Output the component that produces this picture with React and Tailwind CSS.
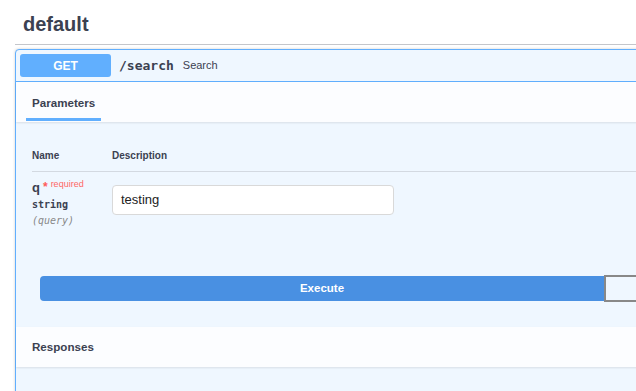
export default function App() {
  return (
    <div className="w-[636px] h-[391px] overflow-hidden bg-white text-[#3b4151] font-['Liberation_Sans',Arial,sans-serif]">
      {/* Tag heading */}
      <div className="ml-[15px] w-[700px] border-b border-[#c4c6cb] pl-[8px] pt-[12px] pb-[8px]">
        <h3 className="text-[20px] leading-[24px] font-bold">default</h3>
      </div>

      {/* Operation block */}
      <div className="ml-[15px] mt-[4px] w-[1240px] rounded-[4px] border border-[#61affe] bg-[#eff7ff] shadow-[0_0_3px_rgba(0,0,0,0.19)]">
        {/* Summary */}
        <div className="flex items-center border-b border-[#61affe] px-[4px] py-[4px]">
          <span className="flex h-[23px] w-[91px] items-center justify-center rounded-[3px] bg-[#61affe] text-[12px] font-bold text-white">
            GET
          </span>
          <span className="ml-[8px] font-['DejaVu_Sans_Mono',monospace] text-[13px] font-bold">/search</span>
          <span className="ml-[9px] text-[11px]">Search</span>
        </div>

        {/* Parameters header */}
        <div className="flex h-[40px] items-end bg-[#fcfdff] pl-[10px] pb-[1px] shadow-[0_1px_2px_rgba(0,0,0,0.1)]">
          <div className="border-b-[3px] border-[#61affe] px-[6px] pb-[7px]">
            <h4 className="text-[11.6px] leading-[16px] font-bold">Parameters</h4>
          </div>
        </div>

        {/* Parameters table */}
        <div className="px-[16px] pt-[27px]">
          <div className="flex border-b border-[#d3d9e1] pb-[8px] text-[10px] leading-[14px] font-bold">
            <div className="w-[80px]">Name</div>
            <div>Description</div>
          </div>
          <div className="flex pt-[7px]">
            <div className="w-[80px]">
              <div className="flex items-start leading-[18px]">
                <span className="text-[13px] font-bold">q</span>
                <span className="ml-[3px] text-[12px] font-bold leading-[16px] text-[#ff5c5c]">*</span>
                <span className="ml-[3px] mt-[-1px] text-[9px] leading-[12px] text-[#ff6666]">required</span>
              </div>
              <div className="font-['DejaVu_Sans_Mono',monospace] text-[10px] leading-[16px] font-bold">string</div>
              <div className="font-['DejaVu_Sans_Mono',monospace] text-[10px] leading-[16px] italic text-[#888]">(query)</div>
            </div>
            <div className="pt-[6px]">
              <div className="flex h-[30px] w-[282px] items-center rounded-[4px] border border-[#d9d9d9] bg-white px-[8px] text-[13px] text-[#222]">
                testing
              </div>
            </div>
          </div>
        </div>

        {/* Execute */}
        <div className="mt-[47px] flex px-[24px]">
          <button className="h-[25px] w-[564px] rounded-l-[4px] border-2 border-[#4990e2] bg-[#4990e2] text-[11.5px] font-bold text-white">
            Execute
          </button>
          <button className="h-[27px] mt-[-1px] w-[564px] rounded-r-[4px] border-2 border-[#888] bg-transparent" />
        </div>

        {/* Responses header */}
        <div className="mt-[25px] flex h-[40px] items-center bg-[#fcfdff] pl-[16px] shadow-[0_1px_2px_rgba(0,0,0,0.1)]">
          <h4 className="text-[11.6px] leading-[16px] font-bold">Responses</h4>
        </div>
        <div className="h-[60px]" />
      </div>
    </div>
  );
}
